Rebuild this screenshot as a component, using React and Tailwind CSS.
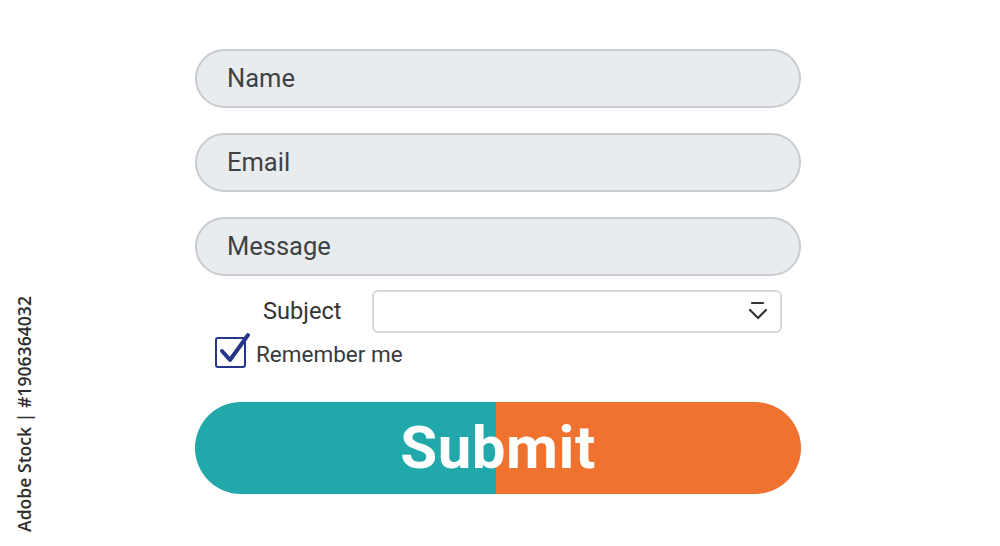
import React, { useState } from "react";

const Field = ({ label }) => (
  <div className="h-[59px] w-full rounded-full border-2 border-[#c8cbcf] bg-[#e9ecef] flex items-center pl-[30px]">
    <span className="text-[25.5px] text-[#3f4245]">{label}</span>
  </div>
);

const App = () => {
  const [remember, setRemember] = useState(true);

  return (
    <div
      className="relative w-[1000px] h-[546px] bg-white overflow-hidden"
      style={{ fontFamily: "Roboto, 'Liberation Sans', sans-serif" }}
    >
      {/* stock watermark label */}
      <div className="absolute left-[13px] top-[532px] origin-top-left -rotate-90 whitespace-nowrap text-[17.6px] font-semibold text-[#2d2d2d] leading-[22px]" style={{ fontFamily: "'Open Sans', sans-serif" }}>
        Adobe Stock | #1906364032
      </div>

      <div className="ml-[195px] w-[606px] pt-[49px] flex flex-col">
        <div className="flex flex-col gap-[25px]">
          <Field label="Name" />
          <Field label="Email" />
          <Field label="Message" />
        </div>

        <div className="mt-[14px] flex items-center h-[43px]">
          <span className="ml-[68px] w-[109px] text-[23.6px] text-[#333]">Subject</span>
          <div className="w-[410px] h-[43px] rounded-[6px] border-2 border-[#d6d8db] bg-white flex items-center justify-end pr-[12px]">
            <svg width="20" height="22" viewBox="0 0 20 22" fill="none" stroke="#333" strokeWidth="2.2" strokeLinecap="round" strokeLinejoin="round">
              <line x1="4" y1="2" x2="15" y2="2" />
              <polyline points="2,9 10,17 18,9" />
            </svg>
          </div>
        </div>

        <div className="mt-[3px] flex items-center h-[32px]">
          <button
            onClick={() => setRemember(!remember)}
            className="relative ml-[20px] w-[31px] h-[31px] rounded-[3px] border-[2.5px] border-[#26368a] bg-white"
          >
            {remember && (
              <svg className="absolute left-[1px] -top-[8px]" width="36" height="36" viewBox="0 0 36 36" fill="none" stroke="#26368a" strokeWidth="4" strokeLinecap="round" strokeLinejoin="round">
                <polyline points="4,20 12,29 30,4" />
              </svg>
            )}
          </button>
          <span className="ml-[10px] mt-[5px] text-[22.5px] text-[#3a3a3a]">Remember me</span>
        </div>

        <button className="mt-[34px] h-[92px] w-full rounded-full overflow-hidden flex items-center justify-center bg-[linear-gradient(to_right,#21a8aa_0%,#21a8aa_49.7%,#ef722f_49.7%,#ef722f_100%)]">
          <span className="text-[60px] font-bold text-white leading-none tracking-[0.5px]">Submit</span>
        </button>
      </div>
    </div>
  );
};

export default App;
